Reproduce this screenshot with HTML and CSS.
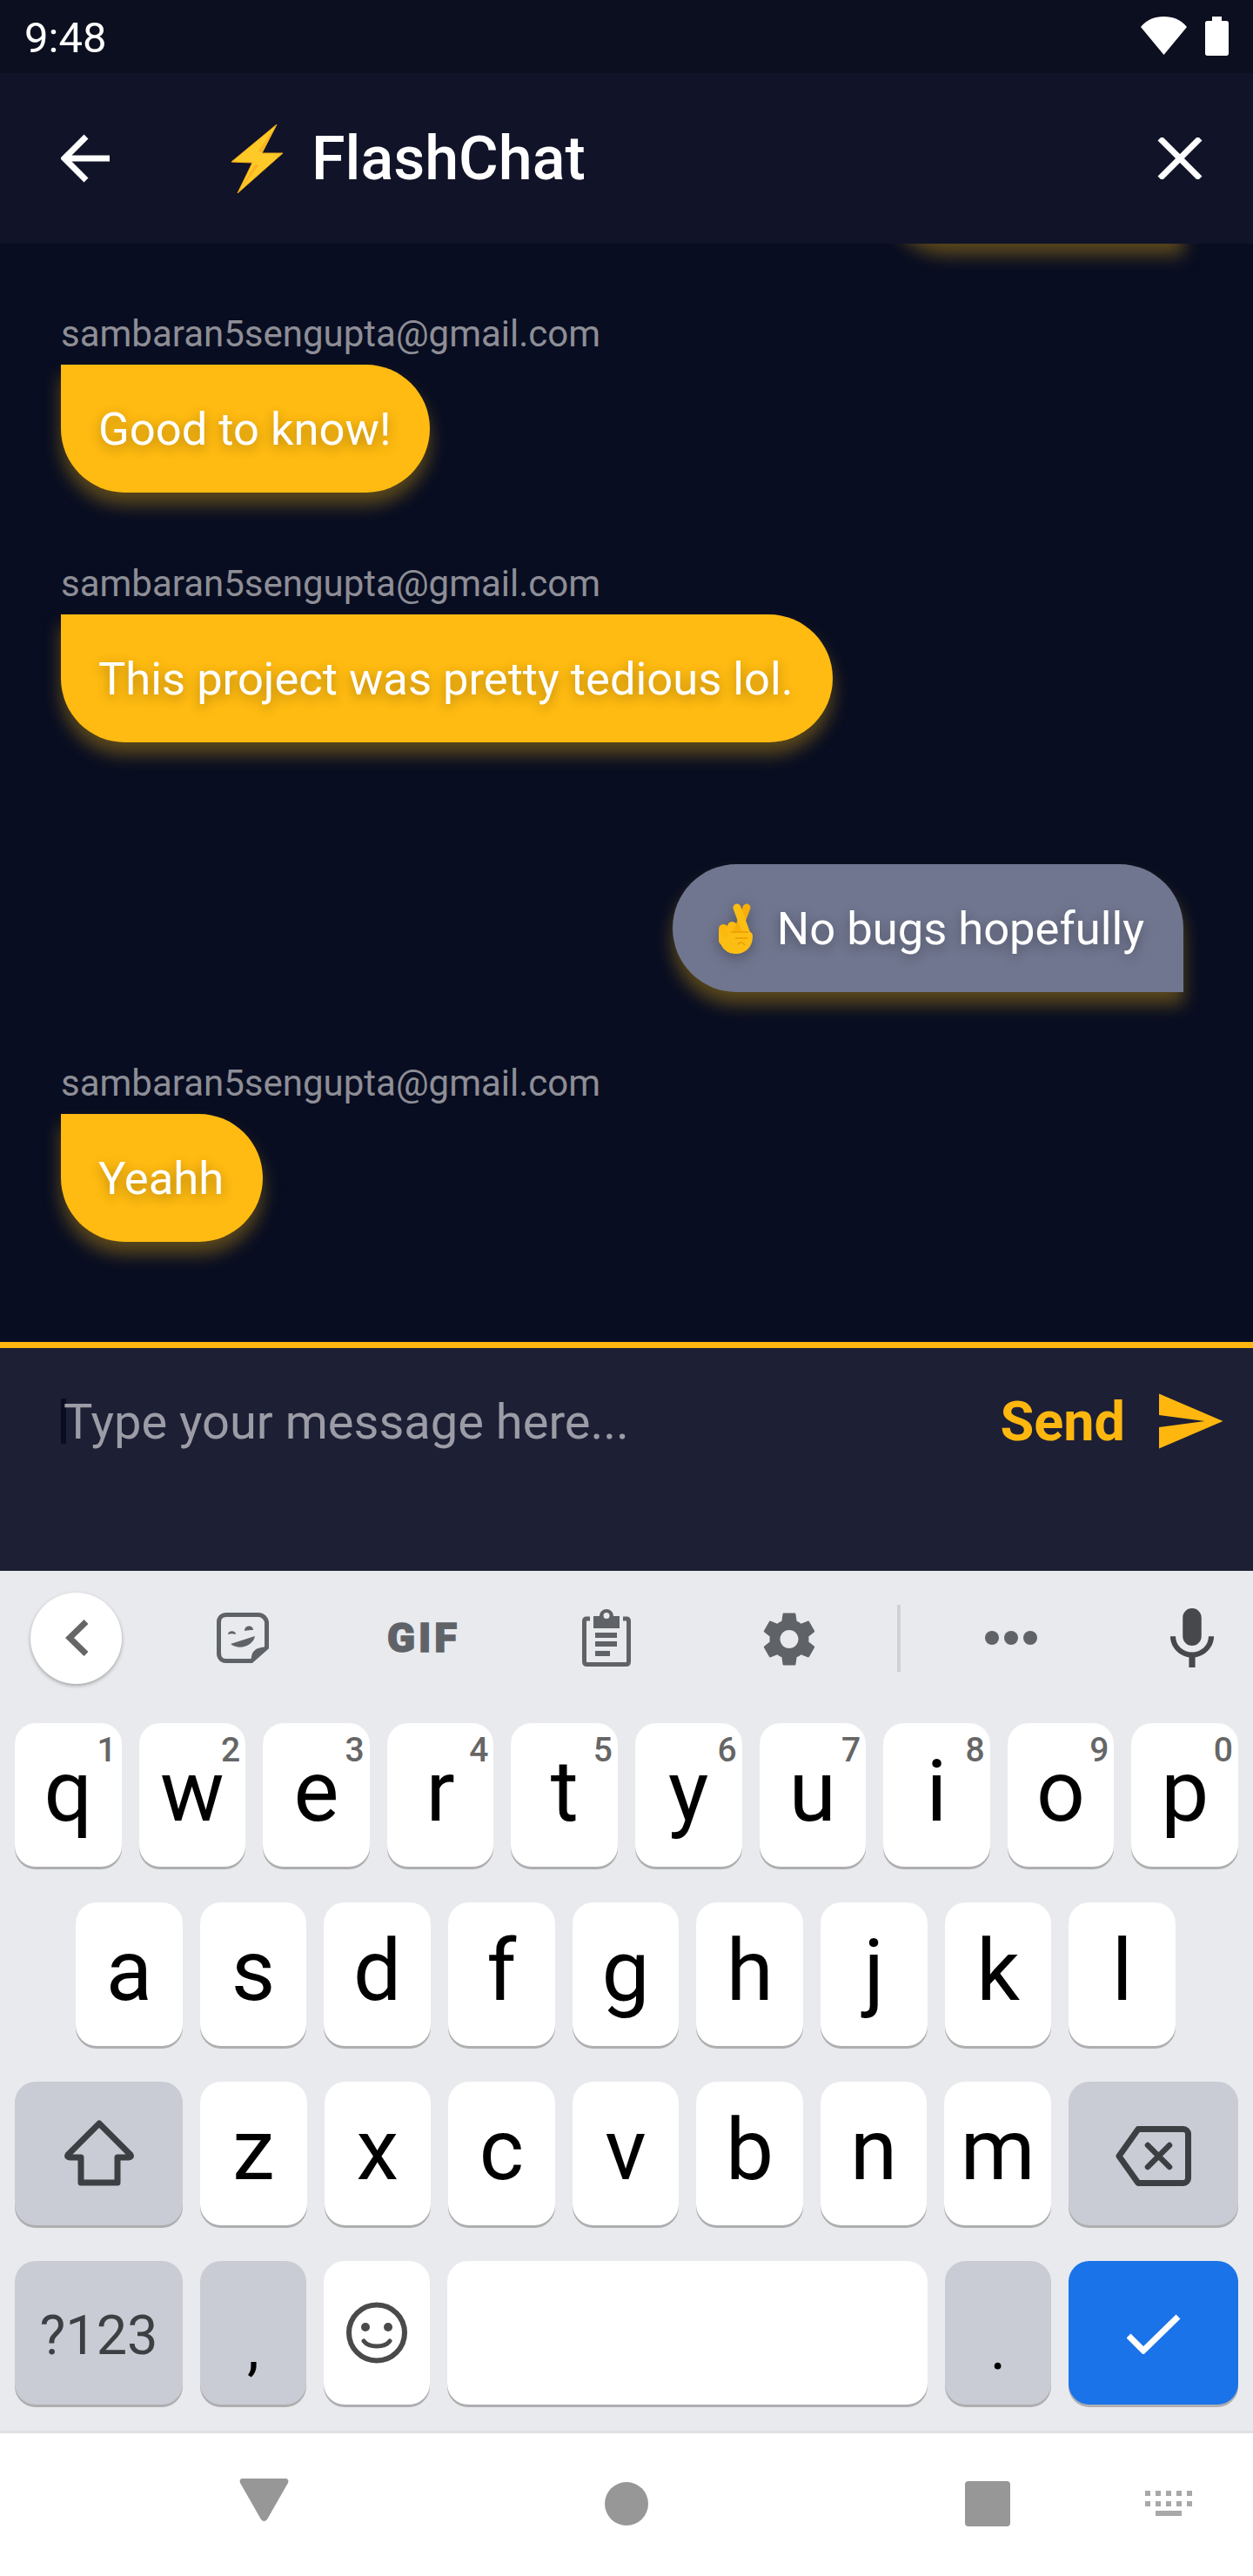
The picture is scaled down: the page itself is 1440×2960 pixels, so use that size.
FILE: index.html
```html
<!DOCTYPE html>
<html lang="en">
<head>
<meta charset="utf-8">
<title>FlashChat</title>
<link rel="stylesheet" href="styles.css">
</head>
<body>
<div class="screen">
  <div class="status">
    <span class="time">9:48</span>
    <svg class="wifi" viewBox="0 0 53 44"><path d="M26.500 0C16 0 7 3.500 0 12L26.500 44L53 12C46 3.500 37 0 26.500 0Z"/></svg>
    <svg class="battery" viewBox="0 0 27 45"><path d="M8 0H19V5H24.500C26 5 27 6 27 7.500V42.500C27 44 26 45 24.500 45H2.500C1 45 0 44 0 42.500V7.500C0 6 1 5 2.500 5H8Z"/></svg>
  </div>
  <header class="appbar">
    <svg class="arrow" viewBox="0 0 56 56"><path d="M29 3L4 28L29 53M4 28H56" fill="none" stroke="#fff" stroke-width="7"/></svg>
    <svg class="bolt" viewBox="0 0 59 79">
      <path d="M52 0L0 43L24 44L7 79L59 33L35 33Z" fill="#ffca28" stroke="#f5ab1a" stroke-width="1" stroke-linejoin="round"/>
      <path d="M51 2L31 30L35 33ZM27 46L10 75L32 46Z" fill="#fbb322"/>
    </svg>
    <h1 class="title">FlashChat</h1>
    <svg class="close" viewBox="0 0 52 48"><path d="M3 1L49 47M49 1L3 47" stroke="#fff" stroke-width="7"/></svg>
  </header>

  <main class="chat">
    <div class="bubble bubble-peek bubble-me"></div>
    <div class="msg">
      <div class="sender">sambaran5sengupta@gmail.com</div>
      <div class="bubble">Good to know!</div>
    </div>
    <div class="msg">
      <div class="sender">sambaran5sengupta@gmail.com</div>
      <div class="bubble">This project was pretty tedious lol.</div>
    </div>
    <div class="msg msg-me">
      <div class="sender"></div>
      <div class="bubble bubble-me"><svg class="fingers" viewBox="0 0 39 58">
          <rect x="0" y="24" width="11" height="24" rx="5.500" fill="#fbb90d"/>
          <rect x="10" y="21" width="11" height="24" rx="5.500" fill="#fcbc12"/>
          <path d="M32 5L20 36" stroke="#f6ae08" stroke-width="9" stroke-linecap="round"/>
          <path d="M21 5L33 38" stroke="#fdbe14" stroke-width="9" stroke-linecap="round"/>
          <path d="M0 33C0 50 8 58 20 58C31 58 39 50 39 38C39 33 36 32 30 32H14L8 40Z" fill="#fdbe14"/>
          <path d="M14 33H34M19 40H33M22 47C25 44 27 44 30 48" fill="none" stroke="#e79c02" stroke-width="1.500"/>
        </svg> No bugs hopefully</div>
    </div>
    <div class="msg">
      <div class="sender">sambaran5sengupta@gmail.com</div>
      <div class="bubble">Yeahh</div>
    </div>
  </main>

  <div class="composer">
    <span class="caret"></span>
    <span class="placeholder">Type your message here...</span>
    <span class="send">Send</span>
    <svg class="send-icon" viewBox="0 0 24 24"><path d="M2.010 21L23 12 2.010 3 2 10l15 2-15 2z"/></svg>
  </div>

  <section class="keyboard">
    <div class="toolbar">
      <span class="tb-back"><svg class="tb-chevron" viewBox="0 0 26 42"><path d="M24 2.500L5 21L24 39.500" fill="none" stroke="#666" stroke-width="7"/></svg></span>
      <svg class="tb-sticker" viewBox="0 0 60 58">
        <path d="M11 2.500H48C53 2.500 57.500 7 57.500 12V40L40 55.500H11C6 55.500 2.500 52 2.500 47V11C2.500 6 6 2.500 11 2.500Z" fill="none" stroke="#5f6368" stroke-width="5"/>
        <path d="M58 40L41 57C37 48 44 38 58 40Z" fill="#5f6368"/>
        <path d="M13 25C13 20 22 20 22 25C19 24 16 24 13 25ZM32 21C32 14 42 14 42 20C39 20 36 20 32 21ZM16 36L44 27C42 38 26 44 16 36Z" fill="#5f6368"/>
      </svg>
      <span class="tb-gif">GIF</span>
      <svg class="tb-clip" viewBox="0 0 56 66">
        <path d="M9 11H5C3 11 2.500 12 2.500 14V60C2.500 62 3.500 63.500 5.500 63.500H50.500C52.500 63.500 53.500 62 53.500 60V14C53.500 12 53 11 51 11H47" fill="none" stroke="#5f6368" stroke-width="5"/>
        <path fill-rule="evenodd" d="M13 8H20C20 3 24 0 28 0S36 3 36 8H43V22H13ZM28 4A3.500 3.500 0 1 0 28 11A3.500 3.500 0 1 0 28 4Z" fill="#5f6368"/>
        <path d="M15 27H40V33H15ZM15 37H40V43H15ZM15 48H32V54H15Z" fill="#5f6368"/>
      </svg>
      <svg class="tb-gear" viewBox="2 2 20 20"><path d="M19.430 12.980c.04-.32.07-.64.07-.98s-.03-.66-.07-.98l2.110-1.650c.19-.15.24-.42.12-.64l-2-3.460c-.12-.22-.39-.3-.61-.22l-2.490 1c-.52-.4-1.080-.73-1.690-.98l-.38-2.650C14.460 2.180 14.250 2 14 2h-4c-.25 0-.46.18-.49.42l-.38 2.650c-.61.25-1.170.59-1.690.98l-2.490-1c-.23-.09-.49 0-.61.22l-2 3.460c-.13.22-.07.49.12.64l2.110 1.650c-.04.32-.07.65-.07.98s.03.66.07.98l-2.110 1.650c-.19.15-.24.42-.12.64l2 3.460c.12.22.39.3.61.22l2.490-1c.52.4 1.080.73 1.690.98l.38 2.650c.03.24.24.42.49.42h4c.25 0 .46-.18.49-.42l.38-2.650c.61-.25 1.170-.59 1.690-.98l2.490 1c.23.09.49 0 .61-.22l2-3.460c.12-.22.07-.49-.12-.64l-2.110-1.650zM12 15.500c-1.930 0-3.500-1.570-3.500-3.500s1.570-3.500 3.500-3.500 3.500 1.570 3.500 3.500-1.570 3.500-3.500 3.500z"/></svg>
      <span class="tb-divider"></span>
      <span class="tb-dots"><i></i><i></i><i></i></span>
      <svg class="tb-mic" viewBox="5 2 14 19"><path d="M12 14c1.660 0 3-1.340 3-3V5c0-1.660-1.340-3-3-3S9 3.340 9 5v6c0 1.660 1.340 3 3 3zm5.300-3c0 3-2.540 5.100-5.300 5.100S6.700 14 6.700 11H5c0 3.410 2.720 6.230 6 6.720V21h2v-3.280c3.280-.48 6-3.300 6-6.720h-1.700z"/></svg>
    </div>

    <div class="row row-top">
      <div class="key">q<sup class="hint">1</sup></div>
      <div class="key">w<sup class="hint">2</sup></div>
      <div class="key">e<sup class="hint">3</sup></div>
      <div class="key">r<sup class="hint">4</sup></div>
      <div class="key">t<sup class="hint">5</sup></div>
      <div class="key">y<sup class="hint">6</sup></div>
      <div class="key">u<sup class="hint">7</sup></div>
      <div class="key">i<sup class="hint">8</sup></div>
      <div class="key">o<sup class="hint">9</sup></div>
      <div class="key">p<sup class="hint">0</sup></div>
    </div>
    <div class="row row-mid">
      <div class="key">a</div><div class="key">s</div><div class="key">d</div>
      <div class="key">f</div><div class="key">g</div><div class="key">h</div>
      <div class="key">j</div><div class="key">k</div><div class="key">l</div>
    </div>
    <div class="row">
      <div class="key key-mod key-left"><svg class="ic-shift" viewBox="0 0 80 76"><path d="M40 4L76 40C77 42 76 43 74 43H61V72H19V43H6C4 43 3 42 4 40Z" fill="none" stroke="#3c4043" stroke-width="7" stroke-linejoin="round"/></svg></div>
      <div class="key">z</div><div class="key">x</div><div class="key">c</div>
      <div class="key">v</div><div class="key">b</div><div class="key">n</div><div class="key">m</div>
      <div class="key key-mod key-right"><svg class="ic-back" viewBox="0 0 87 69"><path d="M26 3.500H78C81 3.500 83.500 6 83.500 9V60C83.500 63 81 65.500 78 65.500H26L4 34.500Z" fill="none" stroke="#3c4043" stroke-width="7" stroke-linejoin="round"/><path d="M37 22L62 47M62 22L37 47" stroke="#3c4043" stroke-width="6.500" stroke-linecap="round"/></svg></div>
    </div>
    <div class="row">
      <div class="key key-mod key-left key-sym">?123</div>
      <div class="key key-mod key-punct">,</div>
      <div class="key"><svg class="ic-smile" viewBox="0 0 70 71"><circle cx="35" cy="35.500" r="32" fill="none" stroke="#4a4a4a" stroke-width="6"/><circle cx="22" cy="29" r="5" fill="#4a4a4a"/><circle cx="48" cy="29" r="5" fill="#4a4a4a"/><path d="M20 45C26 53 44 53 50 45" fill="none" stroke="#4a4a4a" stroke-width="5" stroke-linecap="round"/></svg></div>
      <div class="key key-space"></div>
      <div class="key key-mod key-punct">.</div>
      <div class="key key-enter key-right"><svg class="ic-check" viewBox="0 0 62 46"><path d="M2 25L19 42L59 3" fill="none" stroke="#fff" stroke-width="7"/></svg></div>
    </div>
  </section>

  <nav class="navbar">
    <svg class="nav-back" viewBox="0 0 57 49"><path d="M4 0H53C56 0 57 2 56 5L32 47C30 49.500 27 49.500 25 47L1 5C0 2 1 0 4 0Z"/></svg>
    <span class="nav-home"></span>
    <span class="nav-recent"></span>
    <svg class="nav-kb" viewBox="0 0 54 29"><path d="M0 0H6V6H0ZM12 0H18V6H12ZM24 0H30V6H24ZM36 0H42V6H36ZM48 0H54V6H48ZM0 12H6V18H0ZM12 12H18V18H12ZM24 12H30V18H24ZM36 12H42V18H36ZM48 12H54V18H48ZM12 23H42V29H12Z"/></svg>
  </nav>
</div>
</body>
</html>
```
FILE: styles.css
```css
* { box-sizing: border-box; }

html, body {
  margin: 0;
  padding: 0;
  background: #080d21;
}

.screen {
  width: 1440px;
  height: 2960px;
  display: flex;
  flex-direction: column;
  overflow: hidden;
  font-family: Roboto, "Liberation Sans", sans-serif;
}

/* status bar */
.status {
  height: 84px;
  flex: none;
  background: #0c0f1f;
  display: flex;
  align-items: flex-start;
  color: #fff;
}
.time {
  margin-left: 28px;
  margin-top: 15px;
  font-size: 49px;
  line-height: 57px;
}
.wifi {
  width: 53px;
  height: 44px;
  margin-left: auto;
  margin-top: 19px;
  fill: #fff;
}
.battery {
  width: 27px;
  height: 45px;
  margin-left: 21px;
  margin-right: 28px;
  margin-top: 19px;
  fill: #fff;
}

/* app bar */
.appbar {
  height: 196px;
  flex: none;
  background: #111428;
  display: flex;
  align-items: center;
  position: relative;
  z-index: 1;
}
.arrow { width: 56px; height: 56px; margin-left: 70px; flex: none; }
.bolt { width: 59px; height: 79px; margin-left: 140px; flex: none; }
.title {
  margin: 0 0 0 33px;
  font-size: 70px;
  line-height: 82px;
  font-weight: 500;
  color: #fff;
}
.close { width: 52px; height: 48px; margin-left: auto; margin-right: 58px; flex: none; }

/* messages */
.chat {
  height: 1262px;
  flex: none;
  background: #080d21;
  overflow: hidden;
  display: flex;
  flex-direction: column;
  padding: 0 80px 0 70px;
}
.msg {
  padding-top: 80px;
  display: flex;
  flex-direction: column;
  align-items: flex-start;
}
.msg-me { align-items: flex-end; }
.sender {
  height: 49px;
  margin-bottom: 11px;
  font-size: 42px;
  line-height: 49px;
  color: #8e8e96;
}
.bubble {
  height: 147px;
  padding: 0 45px 0 43px;
  display: flex;
  align-items: center;
  white-space: pre;
  font-size: 52.5px;
  color: #fff;
  background: #ffbb11;
  border-radius: 0 105px 105px 105px;
  box-shadow: 0 14px 20px rgba(255, 187, 17, 0.34);
  text-shadow: 0 4px 14px rgba(0, 0, 0, 0.32);
}
.bubble-peek {
  flex: none;
  align-self: flex-end;
  width: 345px;
  margin-top: -148px;
}
.bubble-me {
  background: #70768f;
  border-radius: 105px 105px 0 105px;
  padding-left: 40px;
}
.fingers {
  width: 39px;
  height: 58px;
  margin-left: 13px;
  margin-right: 15px;
  filter: drop-shadow(0 4px 8px rgba(0, 0, 0, 0.3));
}

/* composer */
.composer {
  height: 263px;
  flex: none;
  background: #1d1f35;
  border-top: 7px solid #ffb70f;
  display: flex;
  align-items: flex-start;
}
.caret {
  width: 6px;
  height: 52px;
  margin-left: 70px;
  margin-top: 58px;
  background: #0a0d22;
}
.placeholder {
  margin-top: 54px;
  margin-left: -3px;
  font-size: 56px;
  line-height: 62px;
  color: #9c9ca6;
}
.send {
  margin-top: 54px;
  margin-left: auto;
  font-size: 63px;
  line-height: 62px;
  font-weight: 700;
  color: #ffb70f;
}
.send-icon {
  width: 84px;
  height: 84px;
  margin-left: 32px;
  margin-right: 31px;
  margin-top: 42px;
  fill: #ffb70f;
}

/* keyboard */
.keyboard {
  height: 991px;
  flex: none;
  background: #e8eaed;
  border-bottom: 3px solid #dfe1e3;
  display: flex;
  flex-direction: column;
  gap: 41px;
}
.toolbar {
  height: 134px;
  flex: none;
  padding-left: 35px;
  padding-top: 20px;
  display: flex;
  align-items: center;
}
.tb-back {
  width: 105px;
  height: 105px;
  flex: none;
  border-radius: 50%;
  background: #fff;
  box-shadow: 0 2px 4px rgba(0, 0, 0, 0.3);
  display: flex;
  align-items: center;
  justify-content: center;
}
.tb-chevron { width: 26px; height: 42px; }
.tb-sticker { width: 60px; height: 58px; margin-left: 109px; flex: none; }
.tb-gif {
  width: 82px;
  margin-left: 136px;
  flex: none;
  font-size: 47px;
  line-height: 46px;
  font-weight: 900;
  letter-spacing: 4px;
  color: #5f6368;
  -webkit-text-stroke: 1.5px #5f6368;
  white-space: nowrap;
}
.tb-clip { width: 56px; height: 66px; margin-left: 142px; flex: none; }
.tb-gear { width: 60px; height: 61px; margin-left: 152px; margin-top: 3px; fill: #5f6368; flex: none; }
.tb-divider { width: 4px; height: 77px; margin-left: 94px; background: #cfd1d5; flex: none; }
.tb-dots { width: 60px; margin-left: 97px; flex: none; display: flex; justify-content: space-between; }
.tb-dots i { width: 16px; height: 16px; border-radius: 50%; background: #5f6368; display: block; }
.tb-mic { width: 52px; height: 68px; margin-left: 152px; fill: #46484b; flex: none; }

.row {
  display: flex;
  gap: 20px;
  padding: 0 17px;
  flex: none;
}
.row-mid { padding: 0 89px 0 87px; }

.key {
  flex: 1 1 0;
  height: 165px;
  position: relative;
  display: flex;
  align-items: flex-start;
  justify-content: center;
  background: #fff;
  border-radius: 24px;
  box-shadow: 0 3px 0 #aeaeb0;
  font-size: 98px;
  line-height: 157px;
  color: #000;
}
.key svg { align-self: center; }
.key-left { flex: 0 0 193px; }
.key-right { flex: 0 0 195px; }
.key-mod { background: #c9ccd4; }
.key-space { flex: 0 0 552px; }
.key-enter { background: #1a73e8; }
.key-sym { font-size: 63px; line-height: 171px; color: #3c4043; }
.key-punct { font-size: 70px; line-height: 200px; }
.hint {
  position: absolute;
  top: 8px;
  right: 6px;
  font-size: 39px;
  line-height: 46px;
  font-weight: 500;
  color: #666;
}
.ic-shift { width: 80px; height: 76px; margin-top: -2px; }
.ic-back { width: 87px; height: 69px; margin-top: 6px; }
.ic-smile { width: 70px; height: 71px; }
.ic-check { width: 62px; height: 46px; margin-top: 3px; }

/* navigation bar */
.navbar {
  flex: 1;
  background: #fff;
  display: flex;
  align-items: flex-start;
}
.nav-back { width: 57px; height: 49px; margin-left: 275px; margin-top: 52px; fill: #979797; flex: none; }
.nav-home { width: 50px; height: 50px; margin-left: 363px; margin-top: 56px; border-radius: 50%; background: #979797; flex: none; }
.nav-recent { width: 52px; height: 52px; margin-left: 364px; margin-top: 55px; border-radius: 4px; background: #979797; flex: none; }
.nav-kb { width: 54px; height: 29px; margin-left: 155px; margin-top: 66px; fill: #a8a8a8; flex: none; }
```
